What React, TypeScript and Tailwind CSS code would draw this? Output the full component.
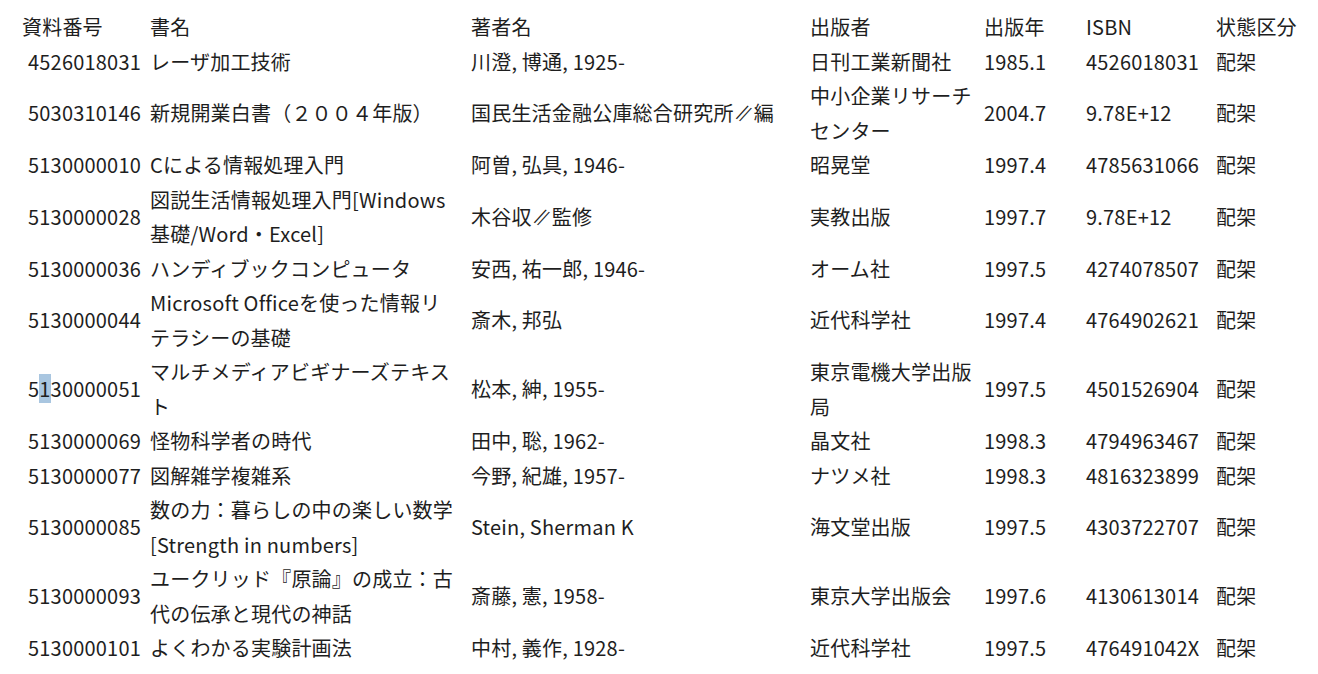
import React from "react";

type Row = {
  id: string;
  title: string[];
  author: string;
  publisher: string[];
  year: string;
  isbn: string;
};

const rows: Row[] = [
  { id: "4526018031", title: ["レーザ加工技術"], author: "川澄, 博通, 1925-", publisher: ["日刊工業新聞社"], year: "1985.1", isbn: "4526018031" },
  { id: "5030310146", title: ["新規開業白書（２００４年版）"], author: "国民生活金融公庫総合研究所∥編", publisher: ["中小企業リサーチ", "センター"], year: "2004.7", isbn: "9.78E+12" },
  { id: "5130000010", title: ["Cによる情報処理入門"], author: "阿曽, 弘具, 1946-", publisher: ["昭晃堂"], year: "1997.4", isbn: "4785631066" },
  { id: "5130000028", title: ["図説生活情報処理入門[Windows", "基礎/Word・Excel]"], author: "木谷収∥監修", publisher: ["実教出版"], year: "1997.7", isbn: "9.78E+12" },
  { id: "5130000036", title: ["ハンディブックコンピュータ"], author: "安西, 祐一郎, 1946-", publisher: ["オーム社"], year: "1997.5", isbn: "4274078507" },
  { id: "5130000044", title: ["Microsoft Officeを使った情報リ", "テラシーの基礎"], author: "斎木, 邦弘", publisher: ["近代科学社"], year: "1997.4", isbn: "4764902621" },
  { id: "5130000051", title: ["マルチメディアビギナーズテキス", "ト"], author: "松本, 紳, 1955-", publisher: ["東京電機大学出版", "局"], year: "1997.5", isbn: "4501526904" },
  { id: "5130000069", title: ["怪物科学者の時代"], author: "田中, 聡, 1962-", publisher: ["晶文社"], year: "1998.3", isbn: "4794963467" },
  { id: "5130000077", title: ["図解雑学複雑系"], author: "今野, 紀雄, 1957-", publisher: ["ナツメ社"], year: "1998.3", isbn: "4816323899" },
  { id: "5130000085", title: ["数の力：暮らしの中の楽しい数学", "[Strength in numbers]"], author: "Stein, Sherman K", publisher: ["海文堂出版"], year: "1997.5", isbn: "4303722707" },
  { id: "5130000093", title: ["ユークリッド『原論』の成立：古", "代の伝承と現代の神話"], author: "斎藤, 憲, 1958-", publisher: ["東京大学出版会"], year: "1997.6", isbn: "4130613014" },
  { id: "5130000101", title: ["よくわかる実験計画法"], author: "中村, 義作, 1928-", publisher: ["近代科学社"], year: "1997.5", isbn: "476491042X" },
];

const gridCls = "grid grid-cols-[128px_321px_339px_174px_102px_130px_1fr] items-center";

function Lines({ lines }: { lines: string[] }) {
  return (
    <div>
      {lines.map((l, i) => (
        <div key={i} className="whitespace-nowrap">{l}</div>
      ))}
    </div>
  );
}

function Author({ text }: { text: string }) {
  const parts = text.split("∥");
  if (parts.length === 1) return <div className="whitespace-nowrap">{text}</div>;
  return (
    <div className="whitespace-nowrap">
      {parts[0]}
      <span className="inline-block -skew-x-[22deg]">∥</span>
      {parts[1]}
    </div>
  );
}

function Id({ id }: { id: string }) {
  if (id === "5130000051") {
    return (
      <div className="text-right pr-[9px] whitespace-nowrap">
        5<span className="bg-[#a9c6e0]">1</span>30000051
      </div>
    );
  }
  return <div className="text-right pr-[9px] whitespace-nowrap">{id}</div>;
}

export default function App() {
  return (
    <div
      className="w-[1318px] h-[674px] overflow-hidden bg-white text-[#1e1e1e] text-[20px] leading-[34.5px] tracking-[0.2px] pl-[22px] pt-[10px]"
      style={{ fontFamily: '"Noto Sans CJK JP", "Noto Sans", sans-serif' }}
    >
      <div className={gridCls}>
        <div>資料番号</div>
        <div>書名</div>
        <div>著者名</div>
        <div>出版者</div>
        <div>出版年</div>
        <div>ISBN</div>
        <div>状態区分</div>
      </div>
      {rows.map((r) => (
        <div key={r.id} className={gridCls}>
          <Id id={r.id} />
          <Lines lines={r.title} />
          <Author text={r.author} />
          <Lines lines={r.publisher} />
          <div>{r.year}</div>
          <div>{r.isbn}</div>
          <div>配架</div>
        </div>
      ))}
    </div>
  );
}
